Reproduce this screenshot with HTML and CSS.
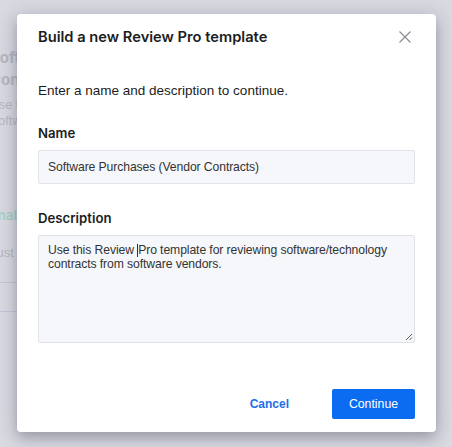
FILE: index.html
```html
<!DOCTYPE html>
<html>
<head>
<meta charset="utf-8">
<link rel="stylesheet" href="styles.css">
</head>
<body>
<div class="page">
  <div class="bg-title">Software<br>Contracts</div>
  <div class="bg-sub">Use the template<br>Software</div>
  <div class="bg-green">Enable</div>
  <div class="bg-sub2">Just up</div>
  <div class="bg-line"></div>
  <div class="bg-line bg-line2"></div>
</div>
<div class="overlay">
  <div class="modal">
    <div class="modal-head">
      <h2 class="modal-title">Build a new Review Pro template</h2>
      <svg class="close" width="14" height="14" viewBox="0 0 14 14"><path d="M1.5 1.5 L12.5 12.5 M12.5 1.5 L1.5 12.5" stroke="#8a8c93" stroke-width="1.2" fill="none"/></svg>
    </div>
    <p class="intro">Enter a name and description to continue.</p>
    <label class="label">Name</label>
    <div class="input">Software Purchases (Vendor Contracts)</div>
    <label class="label label-desc">Description</label>
    <div class="textarea">Use this Review <span class="caret"></span>Pro template for reviewing software/technology contracts from software vendors.<svg class="grip" width="8" height="8" viewBox="0 0 8 8"><path d="M7 1 L1 7 M7 4.5 L4.5 7" stroke="#666" stroke-width="1"/></svg></div>
    <div class="actions">
      <button class="btn-cancel">Cancel</button>
      <button class="btn-primary">Continue</button>
    </div>
  </div>
</div>
</body>
</html>
```
FILE: styles.css
```css
html, body {
  margin: 0;
  padding: 0;
  width: 452px;
  height: 447px;
  overflow: hidden;
  background: #d9d9e1;
  font-family: "Liberation Sans", Arial, sans-serif;
}
.page {
  padding: 47px 0 0 0;
  margin-left: -10px;
  color: #b6b7c1;
}
.bg-title {
  font-family: Inter, sans-serif;
  font-weight: 700;
  font-size: 15px;
  line-height: 22px;
}
.bg-sub {
  margin-top: 6px;
  font-size: 12.5px;
  line-height: 16px;
}
.bg-green {
  margin-top: 78px;
  color: #a3d2c1;
  font-family: Inter, sans-serif;
  font-weight: 600;
  font-size: 13px;
}
.bg-sub2 {
  margin-top: 22px;
  font-size: 13px;
}
.bg-line {
  margin-top: 22px;
  height: 1px;
  background: #c3c6d6;
  width: 40px;
}
.bg-line2 {
  margin-top: 28px;
}
.overlay {
  position: absolute;
  inset: 0;
}
.modal {
  position: absolute;
  left: 17px;
  top: 14px;
  width: 419px;
  height: 418px;
  box-sizing: border-box;
  background: #fff;
  border-radius: 4px;
  box-shadow: 0 6px 14px rgba(60, 60, 80, 0.35), 0 0 24px rgba(60, 60, 80, 0.12);
  padding: 0 21px;
  display: flex;
  flex-direction: column;
}
.modal-head {
  display: flex;
  align-items: center;
  justify-content: space-between;
  height: 46px;
}
.modal-title {
  margin: 0;
  font-family: Inter, sans-serif;
  font-weight: 600;
  font-size: 14.7px;
  color: #1c1d21;
}
.close {
  margin-right: 3px;
}
.intro {
  margin: 22px 0 0 0;
  font-size: 13.5px;
  color: #1c1d21;
  line-height: 18px;
}
.label {
  display: block;
  margin-top: 24px;
  font-family: Inter, sans-serif;
  font-weight: 600;
  font-size: 13.2px;
  color: #1c1d21;
  line-height: 18px;
}
.label-desc {
  margin-top: 25px;
}
.input {
  margin-top: 8px;
  height: 34px;
  box-sizing: border-box;
  border: 1px solid #e2e3e8;
  border-radius: 2px;
  background: #f6f7fb;
  padding: 0 9px;
  display: flex;
  align-items: center;
  font-size: 12.2px;
  letter-spacing: -0.1px;
  color: #333;
}
.textarea {
  position: relative;
  margin-top: 8px;
  height: 108px;
  box-sizing: border-box;
  border: 1px solid #e2e3e8;
  border-radius: 2px;
  background: #f6f7fb;
  padding: 7px 9px;
  font-size: 12.2px;
  letter-spacing: -0.1px;
  line-height: 14px;
  color: #333;
}
.caret {
  display: inline-block;
  width: 1px;
  height: 13px;
  background: #333;
  vertical-align: -3px;
}
.grip {
  position: absolute;
  right: 1px;
  bottom: 1px;
}
.actions {
  margin-top: 46px;
  display: flex;
  justify-content: flex-end;
  align-items: center;
  gap: 43px;
}
.btn-cancel {
  border: 0;
  background: none;
  padding: 0;
  font-family: "Liberation Sans", Arial, sans-serif;
  font-weight: 700;
  font-size: 12px;
  color: #1a6fe8;
}
.btn-primary {
  border: 0;
  width: 83px;
  height: 30px;
  border-radius: 2px;
  background: #0b6cf1;
  color: #fff;
  font-family: "Liberation Sans", Arial, sans-serif;
  font-size: 12.3px;
}
```
